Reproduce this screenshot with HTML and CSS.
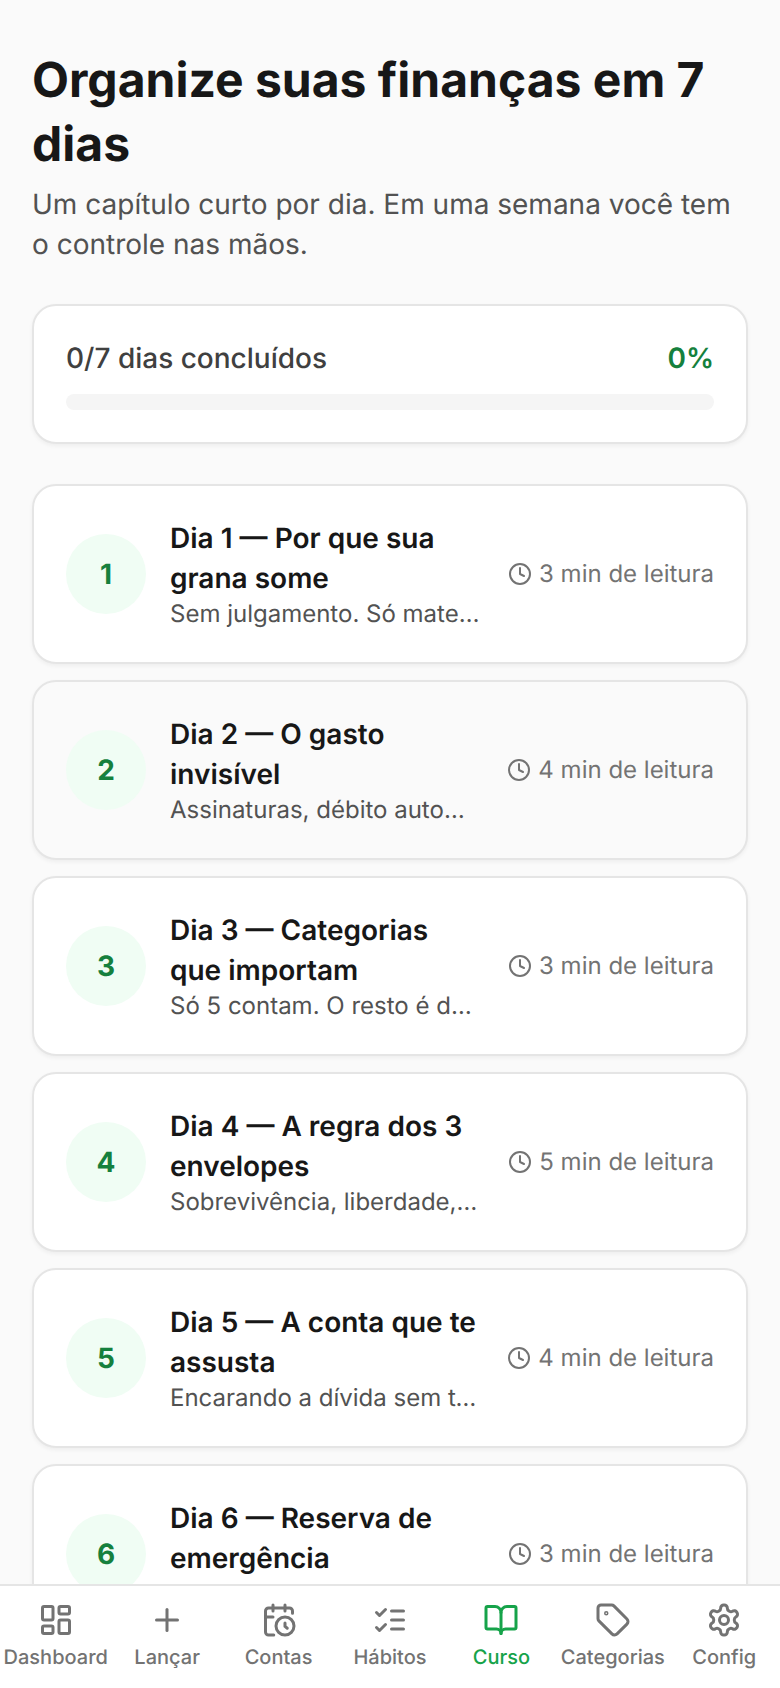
FILE: index.html
```html
<!DOCTYPE html>
<html lang="pt-BR">
<head>
<meta charset="UTF-8">
<meta name="viewport" content="width=device-width, initial-scale=1.0">
<title>Curso</title>
<link rel="stylesheet" href="styles.css">
</head>
<body>

<main class="page">
    <h1>Organize suas finanças em 7 dias</h1>
    <p class="lead">Um capítulo curto por dia. Em uma semana você tem o controle nas mãos.</p>

    <section class="card progress-card">
        <div class="progress-head">
            <span>0/7 dias concluídos</span>
            <strong>0%</strong>
        </div>
        <div class="progress-track"></div>
    </section>

    <ul class="days">
        <li class="card day">
            <span class="day-num">1</span>
            <div class="day-text">
                <h3>Dia 1 — Por que sua grana some</h3>
                <p>Sem julgamento. Só matemática simples.</p>
            </div>
            <span class="day-time"><svg viewBox="0 0 24 24"><circle cx="12" cy="12" r="10"/><path d="M12 6v6l4 2"/></svg>3 min de leitura</span>
        </li>
        <li class="card day day-hover">
            <span class="day-num">2</span>
            <div class="day-text">
                <h3>Dia 2 — O gasto invisível</h3>
                <p>Assinaturas, débito automático e taxas.</p>
            </div>
            <span class="day-time"><svg viewBox="0 0 24 24"><circle cx="12" cy="12" r="10"/><path d="M12 6v6l4 2"/></svg>4 min de leitura</span>
        </li>
        <li class="card day">
            <span class="day-num">3</span>
            <div class="day-text">
                <h3>Dia 3 — Categorias que importam</h3>
                <p>Só 5 contam. O resto é detalhe.</p>
            </div>
            <span class="day-time"><svg viewBox="0 0 24 24"><circle cx="12" cy="12" r="10"/><path d="M12 6v6l4 2"/></svg>3 min de leitura</span>
        </li>
        <li class="card day">
            <span class="day-num">4</span>
            <div class="day-text">
                <h3>Dia 4 — A regra dos 3 envelopes</h3>
                <p>Sobrevivência, liberdade, futuro.</p>
            </div>
            <span class="day-time"><svg viewBox="0 0 24 24"><circle cx="12" cy="12" r="10"/><path d="M12 6v6l4 2"/></svg>5 min de leitura</span>
        </li>
        <li class="card day">
            <span class="day-num">5</span>
            <div class="day-text">
                <h3>Dia 5 — A conta que te assusta</h3>
                <p>Encarando a dívida sem terror nenhum.</p>
            </div>
            <span class="day-time"><svg viewBox="0 0 24 24"><circle cx="12" cy="12" r="10"/><path d="M12 6v6l4 2"/></svg>4 min de leitura</span>
        </li>
        <li class="card day">
            <span class="day-num">6</span>
            <div class="day-text">
                <h3>Dia 6 — Reserva de emergência</h3>
                <p>Seu colchão para os imprevistos.</p>
            </div>
            <span class="day-time"><svg viewBox="0 0 24 24"><circle cx="12" cy="12" r="10"/><path d="M12 6v6l4 2"/></svg>3 min de leitura</span>
        </li>
    </ul>
</main>

<nav class="tabbar">
    <a class="tab">
        <svg viewBox="0 0 24 24"><rect x="3" y="3" width="7" height="9" rx="1"/><rect x="14" y="3" width="7" height="5" rx="1"/><rect x="14" y="12" width="7" height="9" rx="1"/><rect x="3" y="16" width="7" height="5" rx="1"/></svg>
        Dashboard
    </a>
    <a class="tab">
        <svg viewBox="0 0 24 24"><path d="M5 12h14"/><path d="M12 5v14"/></svg>
        Lançar
    </a>
    <a class="tab">
        <svg viewBox="0 0 24 24"><path d="M21 7.5V6a2 2 0 0 0-2-2H5a2 2 0 0 0-2 2v14a2 2 0 0 0 2 2h3.5"/><path d="M16 2v4"/><path d="M8 2v4"/><path d="M3 10h5"/><path d="M17.5 17.5 16 16.3V14"/><circle cx="16" cy="16" r="6"/></svg>
        Contas
    </a>
    <a class="tab">
        <svg viewBox="0 0 24 24"><path d="m3 17 2 2 4-4"/><path d="m3 7 2 2 4-4"/><path d="M13 6h8"/><path d="M13 12h8"/><path d="M13 18h8"/></svg>
        Hábitos
    </a>
    <a class="tab tab-active">
        <svg viewBox="0 0 24 24"><path d="M12 7v14"/><path d="M3 18a1 1 0 0 1-1-1V4a1 1 0 0 1 1-1h5a4 4 0 0 1 4 4 4 4 0 0 1 4-4h5a1 1 0 0 1 1 1v13a1 1 0 0 1-1 1h-6a3 3 0 0 0-3 3 3 3 0 0 0-3-3z"/></svg>
        Curso
    </a>
    <a class="tab">
        <svg viewBox="0 0 24 24"><path d="M12.586 2.586A2 2 0 0 0 11.172 2H4a2 2 0 0 0-2 2v7.172a2 2 0 0 0 .586 1.414l8.704 8.704a2.426 2.426 0 0 0 3.42 0l6.58-6.58a2.426 2.426 0 0 0 0-3.42z"/><circle cx="7.5" cy="7.5" r=".5"/></svg>
        Categorias
    </a>
    <a class="tab">
        <svg viewBox="0 0 24 24"><path d="M12.22 2h-.44a2 2 0 0 0-2 2v.18a2 2 0 0 1-1 1.73l-.43.25a2 2 0 0 1-2 0l-.15-.08a2 2 0 0 0-2.73.73l-.22.38a2 2 0 0 0 .73 2.73l.15.1a2 2 0 0 1 1 1.72v.51a2 2 0 0 1-1 1.74l-.15.09a2 2 0 0 0-.73 2.73l.22.38a2 2 0 0 0 2.73.73l.15-.08a2 2 0 0 1 2 0l.43.25a2 2 0 0 1 1 1.73V20a2 2 0 0 0 2 2h.44a2 2 0 0 0 2-2v-.18a2 2 0 0 1 1-1.73l.43-.25a2 2 0 0 1 2 0l.15.08a2 2 0 0 0 2.73-.73l.22-.39a2 2 0 0 0-.73-2.73l-.15-.08a2 2 0 0 1-1-1.74v-.5a2 2 0 0 1 1-1.74l.15-.09a2 2 0 0 0 .73-2.73l-.22-.38a2 2 0 0 0-2.73-.73l-.15.08a2 2 0 0 1-2 0l-.43-.25a2 2 0 0 1-1-1.73V4a2 2 0 0 0-2-2z"/><circle cx="12" cy="12" r="3"/></svg>
        Config
    </a>
</nav>

</body>
</html>
```

FILE: styles.css
```css
* {
    box-sizing: border-box;
}
html, body {
    margin: 0;
    height: 100%;
}
body {
    display: flex;
    flex-direction: column;
    height: 100vh;
    overflow: hidden;
    background-color: #fafafa;
    color: #171717;
    font-family: Inter, "Liberation Sans", sans-serif;
    text-rendering: geometricPrecision;
}
svg {
    fill: none;
    stroke: currentColor;
    stroke-width: 2;
    stroke-linecap: round;
    stroke-linejoin: round;
}

.page {
    flex: 1;
    min-height: 0;
    overflow: hidden;
    padding: 48px 32px 0;
}
h1 {
    margin: 0;
    font-size: 48px;
    line-height: 64px;
    font-weight: 700;
}
.lead {
    margin: 8px 0 40px;
    font-size: 28px;
    line-height: 40px;
    color: #525252;
}

.card {
    background-color: #fff;
    border: 2px solid #e5e5e5;
    border-radius: 24px;
    box-shadow: 0 2px 4px rgba(0, 0, 0, 0.05);
}

.progress-card {
    padding: 32px;
    margin-bottom: 40px;
}
.progress-head {
    display: flex;
    justify-content: space-between;
    align-items: center;
    font-size: 28px;
    line-height: 40px;
    font-weight: 500;
    color: #404040;
}
.progress-head strong {
    font-weight: 600;
    color: #15803d;
}
.progress-track {
    height: 16px;
    margin-top: 16px;
    border-radius: 8px;
    background-color: #f5f5f5;
}

.days {
    list-style: none;
    margin: 0;
    padding: 0;
    display: flex;
    flex-direction: column;
    gap: 16px;
}
.day {
    display: flex;
    align-items: center;
    gap: 24px;
    padding: 32px;
}
.day-hover {
    background-color: #fafafa;
}
.day-num {
    flex: none;
    display: flex;
    align-items: center;
    justify-content: center;
    width: 80px;
    height: 80px;
    border-radius: 50%;
    background-color: #f0fdf4;
    color: #15803d;
    font-size: 28px;
    font-weight: 700;
}
.day-text {
    flex: 1;
    min-width: 0;
}
.day-text h3 {
    margin: 0;
    font-size: 28px;
    line-height: 40px;
    font-weight: 600;
    color: #171717;
}
.day-text p {
    margin: 0;
    padding-right: 2px;
    font-size: 24px;
    line-height: 32px;
    color: #525252;
    white-space: nowrap;
    overflow: hidden;
    text-overflow: ellipsis;
}
.day-time {
    flex: none;
    display: flex;
    align-items: center;
    gap: 7px;
    font-size: 24px;
    line-height: 32px;
    color: #737373;
}
.day-time svg {
    width: 24px;
    height: 24px;
}

.tabbar {
    flex: none;
    display: flex;
    height: 104px;
    padding-top: 16px;
    background-color: #fff;
    border-top: 2px solid #e5e5e5;
}
.tab {
    flex: 1 1 0;
    min-width: 0;
    display: flex;
    flex-direction: column;
    align-items: center;
    gap: 5px;
    font-size: 20px;
    line-height: 28px;
    font-weight: 500;
    color: #737373;
    white-space: nowrap;
}
.tab svg {
    width: 36px;
    height: 36px;
}
.tab-active {
    color: #16a34a;
}
```
